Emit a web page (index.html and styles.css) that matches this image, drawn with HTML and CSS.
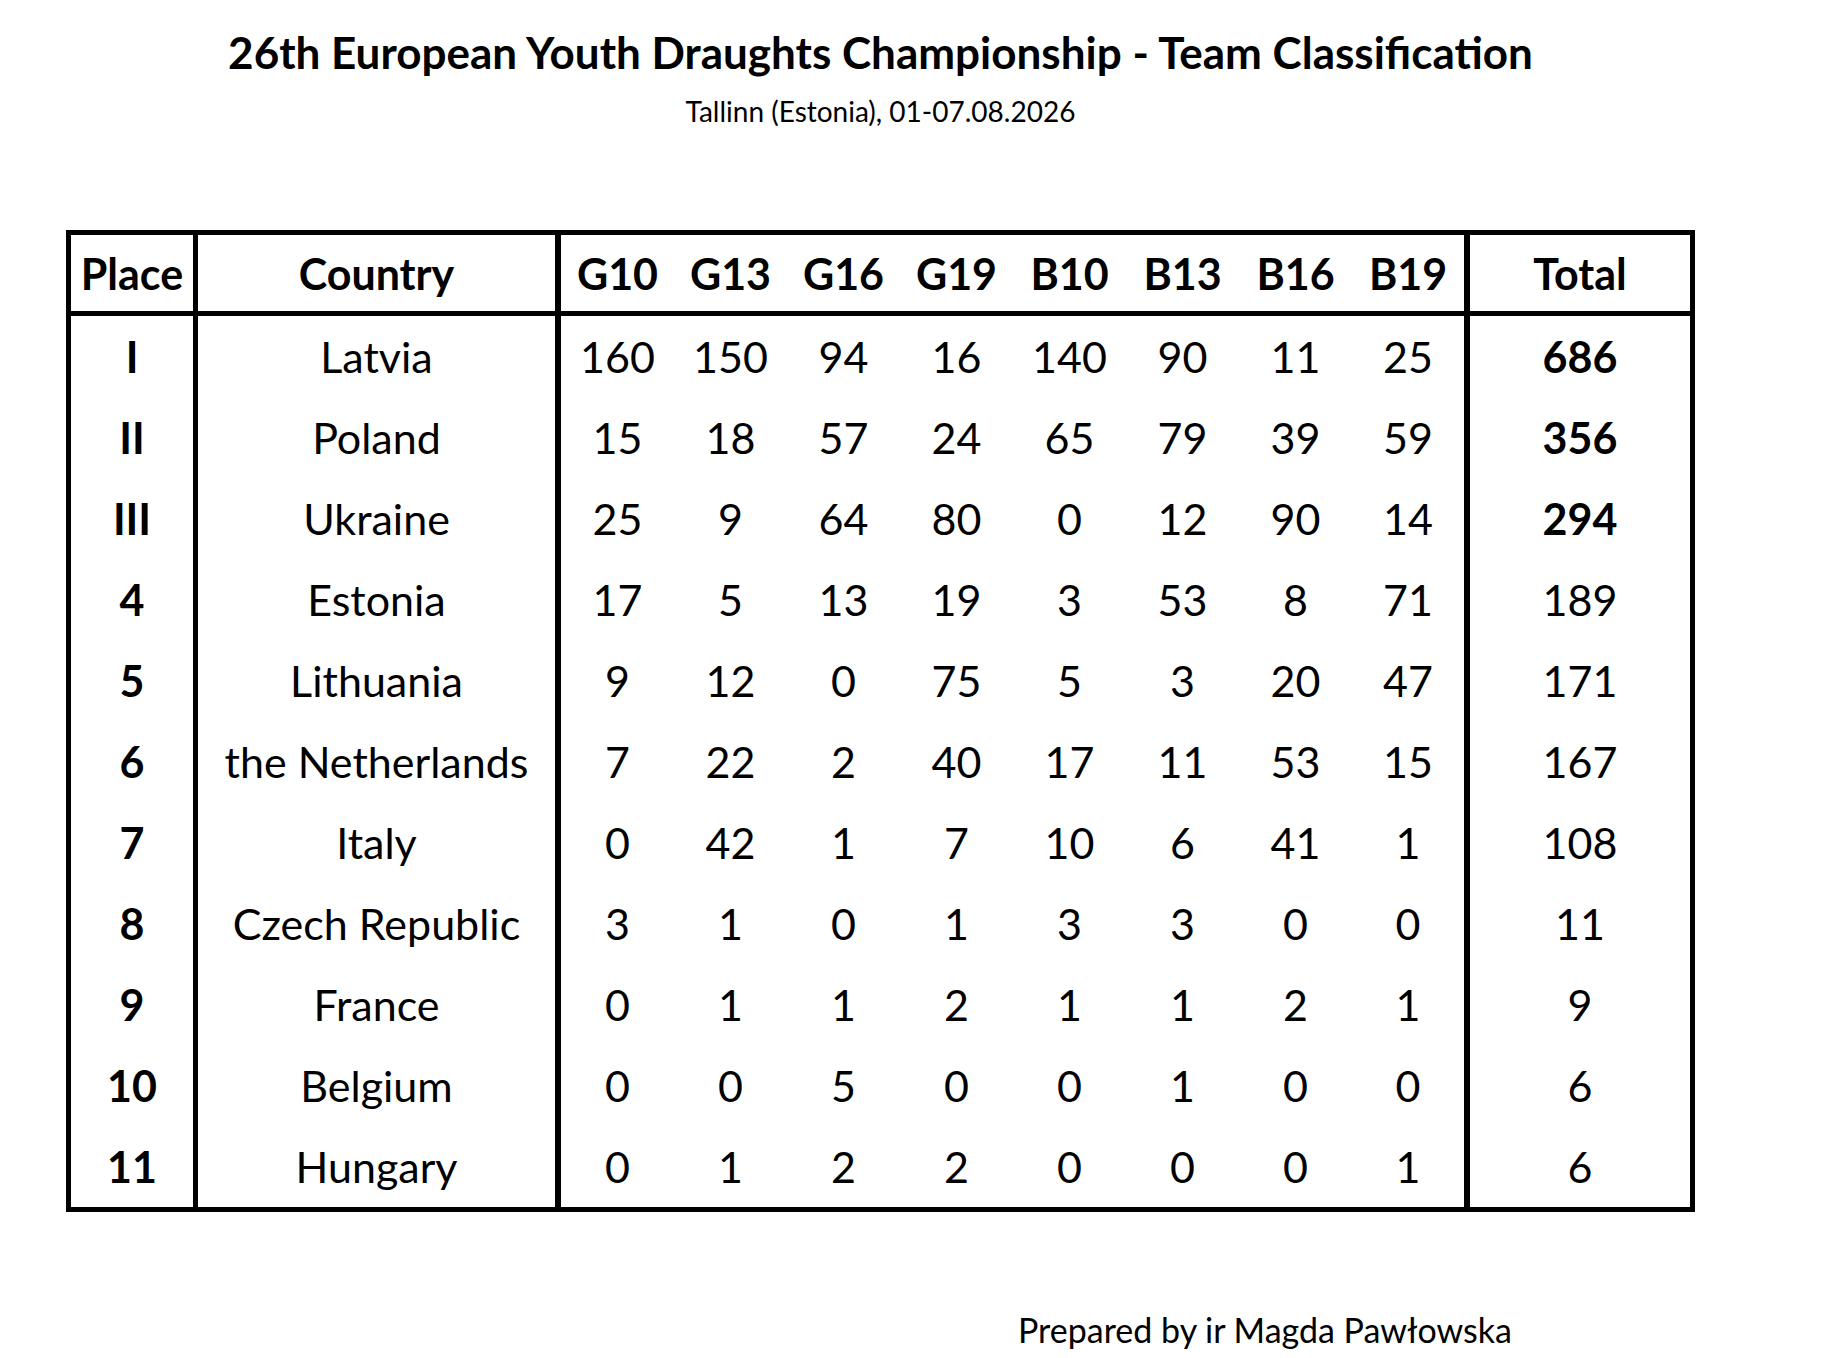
FILE: index.html
```html
<!DOCTYPE html>
<html lang="en">
<head>
<meta charset="utf-8">
<title>26th European Youth Draughts Championship - Team Classification</title>
<link rel="stylesheet" href="styles.css">
</head>
<body>
<div class="page">
  <h1 class="title">26th European Youth Draughts Championship - Team Classification</h1>
  <p class="subtitle">Tallinn (Estonia), 01-07.08.2026</p>
  <table class="standings">
    <colgroup>
      <col class="w-place"><col class="w-country">
      <col class="w-num"><col class="w-num"><col class="w-num"><col class="w-num">
      <col class="w-num"><col class="w-num"><col class="w-num"><col class="w-last">
      <col class="w-total">
    </colgroup>
    <thead>
      <tr class="head">
        <th class="c-place">Place</th><th class="c-country">Country</th>
        <th>G10</th><th>G13</th><th>G16</th><th>G19</th><th>B10</th><th>B13</th><th>B16</th><th class="c-last">B19</th>
        <th>Total</th>
      </tr>
    </thead>
    <tbody>
      <tr><td class="c-place">I</td><td class="c-country">Latvia</td><td>160</td><td>150</td><td>94</td><td>16</td><td>140</td><td>90</td><td>11</td><td class="c-last">25</td><td class="strong">686</td></tr>
      <tr><td class="c-place">II</td><td class="c-country">Poland</td><td>15</td><td>18</td><td>57</td><td>24</td><td>65</td><td>79</td><td>39</td><td class="c-last">59</td><td class="strong">356</td></tr>
      <tr><td class="c-place">III</td><td class="c-country">Ukraine</td><td>25</td><td>9</td><td>64</td><td>80</td><td>0</td><td>12</td><td>90</td><td class="c-last">14</td><td class="strong">294</td></tr>
      <tr><td class="c-place">4</td><td class="c-country">Estonia</td><td>17</td><td>5</td><td>13</td><td>19</td><td>3</td><td>53</td><td>8</td><td class="c-last">71</td><td>189</td></tr>
      <tr><td class="c-place">5</td><td class="c-country">Lithuania</td><td>9</td><td>12</td><td>0</td><td>75</td><td>5</td><td>3</td><td>20</td><td class="c-last">47</td><td>171</td></tr>
      <tr><td class="c-place">6</td><td class="c-country">the Netherlands</td><td>7</td><td>22</td><td>2</td><td>40</td><td>17</td><td>11</td><td>53</td><td class="c-last">15</td><td>167</td></tr>
      <tr><td class="c-place">7</td><td class="c-country">Italy</td><td>0</td><td>42</td><td>1</td><td>7</td><td>10</td><td>6</td><td>41</td><td class="c-last">1</td><td>108</td></tr>
      <tr><td class="c-place">8</td><td class="c-country">Czech Republic</td><td>3</td><td>1</td><td>0</td><td>1</td><td>3</td><td>3</td><td>0</td><td class="c-last">0</td><td>11</td></tr>
      <tr><td class="c-place">9</td><td class="c-country">France</td><td>0</td><td>1</td><td>1</td><td>2</td><td>1</td><td>1</td><td>2</td><td class="c-last">1</td><td>9</td></tr>
      <tr><td class="c-place">10</td><td class="c-country">Belgium</td><td>0</td><td>0</td><td>5</td><td>0</td><td>0</td><td>1</td><td>0</td><td class="c-last">0</td><td>6</td></tr>
      <tr><td class="c-place">11</td><td class="c-country">Hungary</td><td>0</td><td>1</td><td>2</td><td>2</td><td>0</td><td>0</td><td>0</td><td class="c-last">1</td><td>6</td></tr>
    </tbody>
  </table>
  <p class="footer">Prepared by ir Magda Pawłowska</p>
</div>
</body>
</html>
```

FILE: styles.css
```css
html, body {
  margin: 0;
  padding: 0;
  background: #ffffff;
}

body {
  font-family: Lato, "Open Sans", "DejaVu Sans", sans-serif;
  color: #000000;
}

.page {
  width: 1629px;
  margin-left: 66px;
  padding-top: 26px;
}

.title {
  margin: 0;
  font-size: 44px;
  line-height: 53px;
  font-weight: 700;
  text-align: center;
}

.subtitle {
  margin: 15px 0 0;
  font-size: 28px;
  line-height: 34px;
  font-weight: 400;
  text-align: center;
}

.standings {
  margin-top: 102px;
  width: 1629px;
  table-layout: fixed;
  border-collapse: separate;
  border-spacing: 0;
  border: 5px solid #000;
  font-size: 43px;
}

.w-place { width: 127px; }
.w-country { width: 363px; }
.w-num { width: 113px; }
.w-last { width: 118px; }
.w-total { width: 220px; }

.standings th,
.standings td {
  padding: 0;
  text-align: center;
  vertical-align: middle;
  white-space: nowrap;
}

.standings th {
  font-weight: 700;
  border-bottom: 5px solid #000;
}

.standings tr.head { height: 81px; }
.standings tbody tr { height: 81px; }

.standings .c-place {
  font-weight: 700;
  border-right: 5px solid #000;
}

.standings .c-country {
  border-right: 6px solid #000;
}

.standings .c-last {
  border-right: 6px solid #000;
}

.standings .strong {
  font-weight: 700;
}

.footer {
  margin: 97px 0 0;
  padding-left: 952px;
  font-size: 34px;
  line-height: 41px;
  font-weight: 400;
}
```
